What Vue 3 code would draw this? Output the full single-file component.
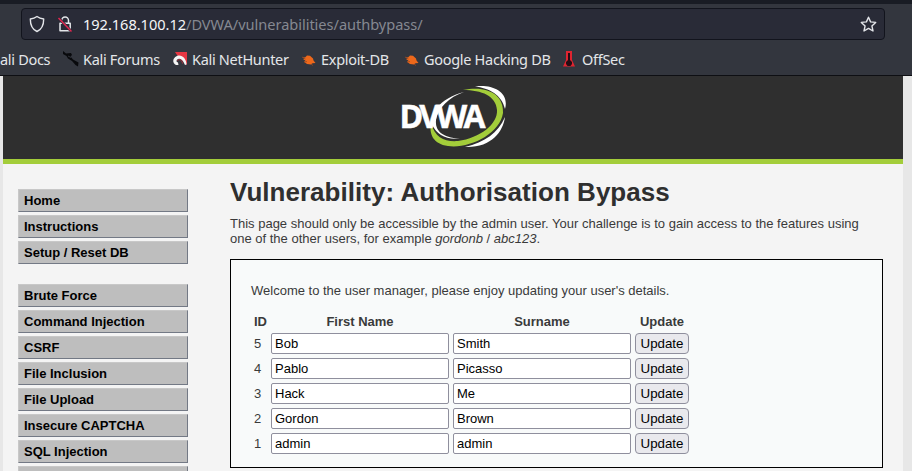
<script setup>
const mainMenu = ['Home', 'Instructions', 'Setup / Reset DB']
const attackMenu = [
  'Brute Force', 'Command Injection', 'CSRF', 'File Inclusion',
  'File Upload', 'Insecure CAPTCHA', 'SQL Injection', '',
]
const users = [
  { id: 5, first: 'Bob', last: 'Smith' },
  { id: 4, first: 'Pablo', last: 'Picasso' },
  { id: 3, first: 'Hack', last: 'Me' },
  { id: 2, first: 'Gordon', last: 'Brown' },
  { id: 1, first: 'admin', last: 'admin' },
]
</script>

<template>
  <div class="window">
    <header class="chrome">
      <div class="urlbar">
        <svg class="shield" width="16" height="18" viewBox="0 0 16 18" fill="none" stroke="#e4e6ea" stroke-width="1.4" stroke-linejoin="round">
          <path d="M8 1.5C6 3 3.700 3.700 1.300 4C1.300 9.500 3 14.300 8 16.500C13 14.300 14.700 9.500 14.700 4C12.300 3.700 10 3 8 1.500Z" />
        </svg>
        <svg class="lock" width="16" height="18" viewBox="0 0 16 18" fill="none">
          <path d="M4.700 8V5.500a3.400 3.600 0 0 1 6.800 0V8M3 8.200H13.200V15.800H3Z" stroke="#e4e6ea" stroke-width="1.500" stroke-linejoin="round" />
          <path d="M1.500 3L14.500 16.500" stroke="#292b37" stroke-width="2.600" />
          <path d="M1.500 3L14.500 16.500" stroke="#e22850" stroke-width="1.500" />
        </svg>
        <span class="url"><span class="host">192.168.100.12</span>/DVWA/vulnerabilities/authbypass/</span>
        <svg class="star" width="17" height="17" viewBox="0 0 17 17" fill="none" stroke="#e4e6ea" stroke-width="1.400" stroke-linejoin="round">
          <path d="M8.500 1.200L10.600 5.900L15.700 6.400L11.900 9.900L13 15L8.500 12.400L4 15L5.100 9.900L1.300 6.400L6.400 5.900Z" />
        </svg>
      </div>
      <nav class="bookmarks">
        <a class="docs">ali Docs</a>
        <a class="forums">
          <svg width="18" height="18" viewBox="0 0 18 18"><path d="M1 1L4 3.500L9 3L10 5L8.500 6.500L11 9.500L16.500 12.500L16 16.500L13.500 15L10 11L6 8.500L4.500 6L1 4Z" fill="#08090c" /><path d="M6 6L9 7.500" stroke="#30333a" /></svg>
          Kali Forums
        </a>
        <a class="nethunter">
          <svg width="16" height="16" viewBox="0 0 16 16"><path d="M3 1H15V14L11.500 10.500L5 4Z" fill="#e63642" /><path d="M14.500 13.500C14.500 8 10.500 4 6.500 4.500C3 5.200.8 8 1.400 11C2 13.300 4 14.500 6.500 14L6 11.500C4.500 11.300 4 10 5 8.800C6.500 7 9.500 7.500 11.500 11L13 14Z" fill="#f5f5f5" /><path d="M5.500 9.500C7.500 7.500 10 9 10.500 12.500" fill="none" stroke="#b92d38" stroke-width="1" /></svg>
          Kali NetHunter
        </a>
        <a class="exploit">
          <svg width="16" height="14" viewBox="0 0 16 14"><path d="M1.500 5L4 5.500L6 3.500L9 3.800L12 6.500L12.500 8.500L14.500 11L11.500 11.200L10 12.500L6 12L3 9.800L4.500 8.800L2 7L3.700 6.500Z" fill="#ed681b" /><path d="M1 5L4.500 7M3 10L6 9.500M10 12L12 13.500" stroke="#984b27" stroke-width=".8" /></svg>
          Exploit-DB
        </a>
        <a class="google">
          <svg width="16" height="14" viewBox="0 0 16 14"><path d="M1.500 5L4 5.500L6 3.500L9 3.800L12 6.500L12.500 8.500L14.500 11L11.500 11.200L10 12.500L6 12L3 9.800L4.500 8.800L2 7L3.700 6.500Z" fill="#ed681b" /><path d="M1 5L4.500 7M3 10L6 9.500M10 12L12 13.500" stroke="#984b27" stroke-width=".8" /></svg>
          Google Hacking DB
        </a>
        <a class="offsec">
          <svg width="14" height="18" viewBox="0 0 14 18"><path d="M4 1H10V10L13 16.500H1L4 10Z" fill="#df2430" /><path d="M6 3H8V10L10 12V14L8.500 16H5.500L4 14V12L6 10Z" fill="#250d14" /></svg>
          OffSec
        </a>
      </nav>
    </header>
    <div class="page">
      <div class="banner">
        <svg class="logo" width="112" height="68" viewBox="0 0 112 68">
          <path d="M78 3.500C94 1 113 8 108 26C105 12 92 5 78 3.500Z" fill="#fff" />
          <path d="M108 34C106 49 94 65 68 64C88 59 101 50 108 34Z" fill="#fff" />
          <path d="M66 7C91 2 107 12 106 30C103 51 72 66 51 63C36 61 32 51 34 40C38 55 48 59 61 58C83 55 101 41 100 27C99 13 85 7 66 7Z" fill="#a3cd3a" />
          <path d="M67 9C43 15 29 33 37 45C42 53 50 56 63 56C45 54 38 48 39 37C41 25 52 14 67 9Z" fill="#fff" />
          <text x="2.500" y="44.500" textLength="86" lengthAdjust="spacing">DVWA</text>
        </svg>
      </div>
      <div class="body">
        <aside class="menu">
          <ul><li v-for="item in mainMenu" :key="item">{{ item }}</li></ul>
          <ul><li v-for="item in attackMenu" :key="item">{{ item }}</li></ul>
        </aside>
        <main class="content">
          <h1>Vulnerability: Authorisation Bypass</h1>
          <p class="intro">This page should only be accessible by the admin user. Your challenge is to gain access to the features using<br>one of the other users, for example <em>gordonb</em> / <em>abc123</em>.</p>
          <section class="panel">
            <p>Welcome to the user manager, please enjoy updating your user's details.</p>
            <table>
              <thead><tr><th class="id">ID</th><th>First Name</th><th>Surname</th><th>Update</th></tr></thead>
              <tbody>
                <tr v-for="user in users" :key="user.id">
                  <td class="id">{{ user.id }}</td>
                  <td><input type="text" :value="user.first"></td>
                  <td><input type="text" :value="user.last"></td>
                  <td><button type="button">Update</button></td>
                </tr>
              </tbody>
            </table>
          </section>
        </main>
      </div>
    </div>
  </div>
</template>

<style>
body { margin: 0; overflow: hidden; }
</style>

<style scoped>
* { box-sizing: border-box; }
.window { width: 912px; height: 471px; overflow: hidden; background: #e7e7e7; display: flex; flex-direction: column; }
.chrome { height: 76px; flex: none; background: #33363e; border-top: 4px solid #191c24; border-bottom: 1px solid #0e0f13; padding: 4px 27px 0 0; font-family: "Noto Sans", sans-serif; }
.urlbar { height: 32px; margin-left: 21px; border: 1px solid #12141d; border-radius: 4px; background: #292b37; display: flex; align-items: center; padding: 0 7px; }
svg { flex: none; display: block; }
.lock { margin-left: 12px; }
.url { margin-left: 10px; font-size: 14.600px; letter-spacing: -.04px; color: #858891; white-space: nowrap; }
.host { color: #f4f5f8; }
.star { margin-left: auto; }
.bookmarks { height: 38px; display: flex; align-items: center; color: #e4e6e9; font-size: 14.500px; letter-spacing: -.3px; white-space: nowrap; }
.bookmarks a { display: flex; align-items: center; flex: none; }
.docs { width: 62px; }
.forums { width: 110px; gap: 3px; }
.nethunter { width: 129px; gap: 4px; }
.exploit { width: 103px; gap: 4px; }
.google { width: 158px; gap: 4px; }
.offsec { gap: 6px; }
.page { width: 900px; margin-left: 3px; height: 395px; background: #f4f4f4; font: 13px/15px "Liberation Sans", Arial, sans-serif; color: #3a3a3a; overflow: hidden; }
.banner { height: 88px; background: #2f2f2f; border-bottom: 5px solid #a3cd3a; display: flex; justify-content: center; padding-top: 7px; }
.logo text { font: 700 32px "Open Sans", sans-serif; fill: #fff; stroke: #fff; stroke-width: .5; }
.body { display: flex; padding-left: 15px; }
.menu { width: 170px; padding-top: 25px; flex: none; }
ul { list-style: none; margin: 0 0 20px; padding: 0; display: flex; flex-direction: column; gap: 3px; }
li { height: 23px; background: #bebebe; border: solid #c8c8c8; border-width: 1px; border-right-color: #737985; border-bottom-color: #737985; padding: 3px 5px; color: #000; font-weight: 700; }
.content { width: 653px; margin-left: 42px; padding-top: 13px; }
h1 { margin: 0; font-size: 26px; letter-spacing: .03px; line-height: 30px; color: #2f2f2f; white-space: nowrap; }
.intro { margin: 9px 0 13px; white-space: nowrap; }
.panel { height: 209px; border: 1px solid #000; background: #f8fafa; padding: 23px 20px 0; }
.panel p { margin: 0 0 13px; }
table { border-collapse: separate; border-spacing: 2px; }
th, td { padding: 1px; height: 17px; line-height: 15px; }
td { height: 23px; padding: 0 1px; }
.id { width: 15px; text-align: left; }
input { display: block; width: 178px; height: 21px; border: 1px solid #8f8f9d; border-radius: 2px; padding: 1px 3px; background: #fff; color: #000; font: 13px "Liberation Sans", Arial, sans-serif; }
button { display: block; width: 54px; height: 21px; border: 1px solid #8f8f9d; border-radius: 4px; padding: 0; background: #e9e9ed; color: #000; font: 13.333px "Liberation Sans", Arial, sans-serif; }
</style>
